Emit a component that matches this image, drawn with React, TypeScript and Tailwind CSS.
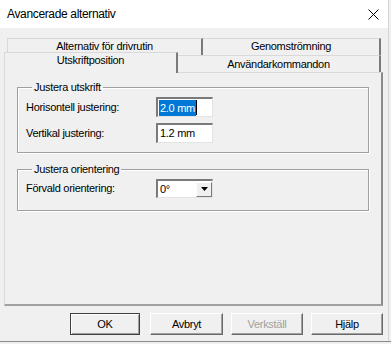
export default function App() {
  const font = { fontFamily: '"Liberation Sans", Arial, sans-serif' };
  return (
    <div
      className="w-[391px] h-[344px] bg-[#f0f0f0] overflow-hidden text-black text-[11px] leading-[13px] tracking-[-0.3px]"
      style={font}
    >
      <div className="w-[389px] h-[341px] border-r border-[#d4d4d4] flex flex-col">
        {/* title bar */}
        <div className="h-[28px] bg-white flex items-center justify-between pl-[7px] pr-[8px]">
          <span className="text-[12px] leading-[14px] tracking-[-0.35px]">Avancerade alternativ</span>
          <svg width="11" height="11" viewBox="0 0 11 11" className="mr-[1px]">
            <path d="M0.5 0.5 L10.5 10.5 M10.5 0.5 L0.5 10.5" stroke="#000" strokeWidth="1" />
          </svg>
        </div>

        <div className="pl-[4px] pt-[10px]">
          {/* tab row 1 */}
          <div className="flex ml-[3px] h-[17px]">
            <div className="w-[196px] border-t border-l border-[#d9d9d9] border-r-2 border-r-[#7a7a7a] flex justify-center pt-[1px]">
              Alternativ för drivrutin
            </div>
            <div className="w-[178px] border-t border-[#d9d9d9] border-r-2 border-r-[#7a7a7a] flex justify-center pt-[1px]">
              Genomströmning
            </div>
          </div>
          {/* tab row 2 */}
          <div className="flex items-end h-[20px] -mt-[3px]">
            <div className="relative z-10 w-[174px] h-[21px] bg-[#f0f0f0] border-t border-l border-[#d9d9d9] border-r-2 border-r-[#7a7a7a] flex justify-center pt-[1px] -mb-[1px]">
              Utskriftposition
            </div>
            <div className="w-[203px] h-[17px] bg-[#f0f0f0] border-t border-[#d9d9d9] border-r-2 border-r-[#7a7a7a] flex justify-center pt-[2px]">
              Användarkommandon
            </div>
          </div>

          {/* panel */}
          <div className="w-[379px] h-[234px] border-t border-l border-[#d9d9d9] border-r-2 border-b-2 border-r-[#8a8a8a] border-b-[#a0a0a0] pl-[12px] pt-[8px] flex flex-col gap-[10px]">
            <fieldset className="w-[352px] border border-[#a0a0a0] shadow-[inset_1px_1px_0_#fff,1px_1px_0_#fff] pl-[8px] pt-[3px] pb-[9px] flex flex-col gap-[6px]">
              <legend className="ml-[6px] px-[2px]">Justera utskrift</legend>
              <div className="flex items-center">
                <span className="w-[130px]">Horisontell justering:</span>
                <div className="w-[57px] h-[20px] bg-white border-t-2 border-l-2 border-t-[#7a7a7a] border-l-[#7a7a7a] border-r border-b border-[#e3e3e3] flex items-center pl-[1px]">
                  <span className="bg-[#0078d7] text-white px-[1px] leading-[16px]">2.0 mm</span>
                  <span className="w-px h-[15px] bg-black" />
                </div>
              </div>
              <div className="flex items-center">
                <span className="w-[130px]">Vertikal justering:</span>
                <div className="w-[57px] h-[20px] bg-white border-t-2 border-l-2 border-t-[#7a7a7a] border-l-[#7a7a7a] border-r border-b border-[#e3e3e3] flex items-center pl-[2px]">
                  1.2 mm
                </div>
              </div>
            </fieldset>

            <fieldset className="w-[352px] border border-[#a0a0a0] shadow-[inset_1px_1px_0_#fff,1px_1px_0_#fff] pl-[8px] pt-[3px] pb-[12px]">
              <legend className="ml-[6px] px-[2px]">Justera orientering</legend>
              <div className="flex items-center">
                <span className="w-[130px]">Förvald orientering:</span>
                <div className="w-[57px] h-[19px] bg-white border-t-2 border-l-2 border-t-[#7a7a7a] border-l-[#7a7a7a] border-r border-b border-[#e3e3e3] flex items-center justify-between">
                  <span className="pl-[2px]">0°</span>
                  <div className="w-[16px] h-[15px] bg-[#f0f0f0] border-t border-l border-white border-r border-b border-r-[#7a7a7a] border-b-[#7a7a7a] flex items-center justify-center">
                    <svg width="7" height="4" viewBox="0 0 7 4">
                      <path d="M0 0 H7 L3.5 4 Z" fill="#000" />
                    </svg>
                  </div>
                </div>
              </div>
            </fieldset>
          </div>

          {/* buttons */}
          <div className="flex mt-[7px] pl-[66px]">
            <button className="w-[70px] h-[22px] mr-[10px] bg-[#f0f0f0] border border-[#404040] shadow-[inset_1px_1px_0_#fff,inset_-1px_-1px_0_#a0a0a0]">
              OK
            </button>
            <button className="w-[73px] h-[22px] mr-[8px] bg-[#f0f0f0] border border-t-white border-l-white border-r-[#696969] border-b-[#696969] shadow-[inset_-1px_-1px_0_#a0a0a0]">
              Avbryt
            </button>
            <button className="w-[72px] h-[22px] mr-[8px] bg-[#f0f0f0] text-[#a0a0a0] border border-t-white border-l-white border-r-[#696969] border-b-[#696969] shadow-[inset_-1px_-1px_0_#a0a0a0]">
              Verkställ
            </button>
            <button className="w-[72px] h-[22px] bg-[#f0f0f0] border border-t-white border-l-white border-r-[#696969] border-b-[#696969] shadow-[inset_-1px_-1px_0_#a0a0a0]">
              Hjälp
            </button>
          </div>
        </div>
      </div>
      <div className="h-px bg-[#8a8a8a]" />
    </div>
  );
}
